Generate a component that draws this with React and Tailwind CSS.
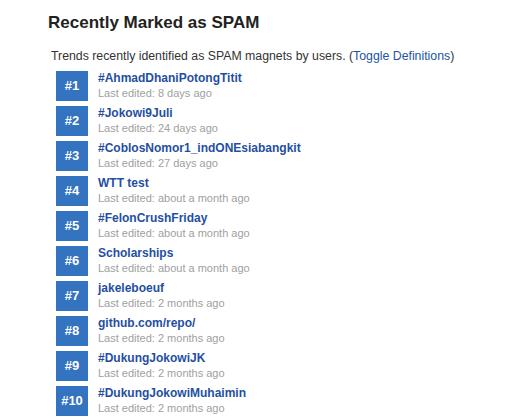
import React from "react";

const items = [
  { tag: "#AhmadDhaniPotongTitit", edited: "8 days ago" },
  { tag: "#Jokowi9Juli", edited: "24 days ago" },
  { tag: "#CoblosNomor1_indONEsiabangkit", edited: "27 days ago" },
  { tag: "WTT test", edited: "about a month ago" },
  { tag: "#FelonCrushFriday", edited: "about a month ago" },
  { tag: "Scholarships", edited: "about a month ago" },
  { tag: "jakeleboeuf", edited: "2 months ago" },
  { tag: "github.com/repo/", edited: "2 months ago" },
  { tag: "#DukungJokowiJK", edited: "2 months ago" },
  { tag: "#DukungJokowiMuhaimin", edited: "2 months ago" },
];

export default function App() {
  return (
    <div
      className="w-[523px] h-[418px] overflow-hidden bg-white pl-[48px] pt-[13px]"
      style={{ fontFamily: '"Liberation Sans", Arial, sans-serif' }}
    >
      <h2 className="text-[17px] leading-[20px] font-bold text-[#222]">
        Recently Marked as SPAM
      </h2>

      <p className="mt-[15px] ml-[3px] text-[12.3px] leading-[16px] text-[#333]">
        Trends recently identified as SPAM magnets by users. (
        <a className="text-[#2255a4] cursor-pointer">Toggle Definitions</a>)
      </p>

      <ul className="mt-[7px] ml-[8px] flex flex-col gap-[5px]">
        {items.map((item, i) => (
          <li key={i} className="flex items-start">
            <div className="w-[32px] h-[30px] bg-[#3373bf] text-white font-bold text-[13px] flex items-center justify-center">
              #{i + 1}
            </div>
            <div className="ml-[10px]">
              <div className="text-[12px] leading-[14px] font-bold text-[#1f4fa3]">
                {item.tag}
              </div>
              <div className="text-[11px] leading-[16px] text-[#a0a0a0]">
                Last edited: {item.edited}
              </div>
            </div>
          </li>
        ))}
      </ul>
    </div>
  );
}
